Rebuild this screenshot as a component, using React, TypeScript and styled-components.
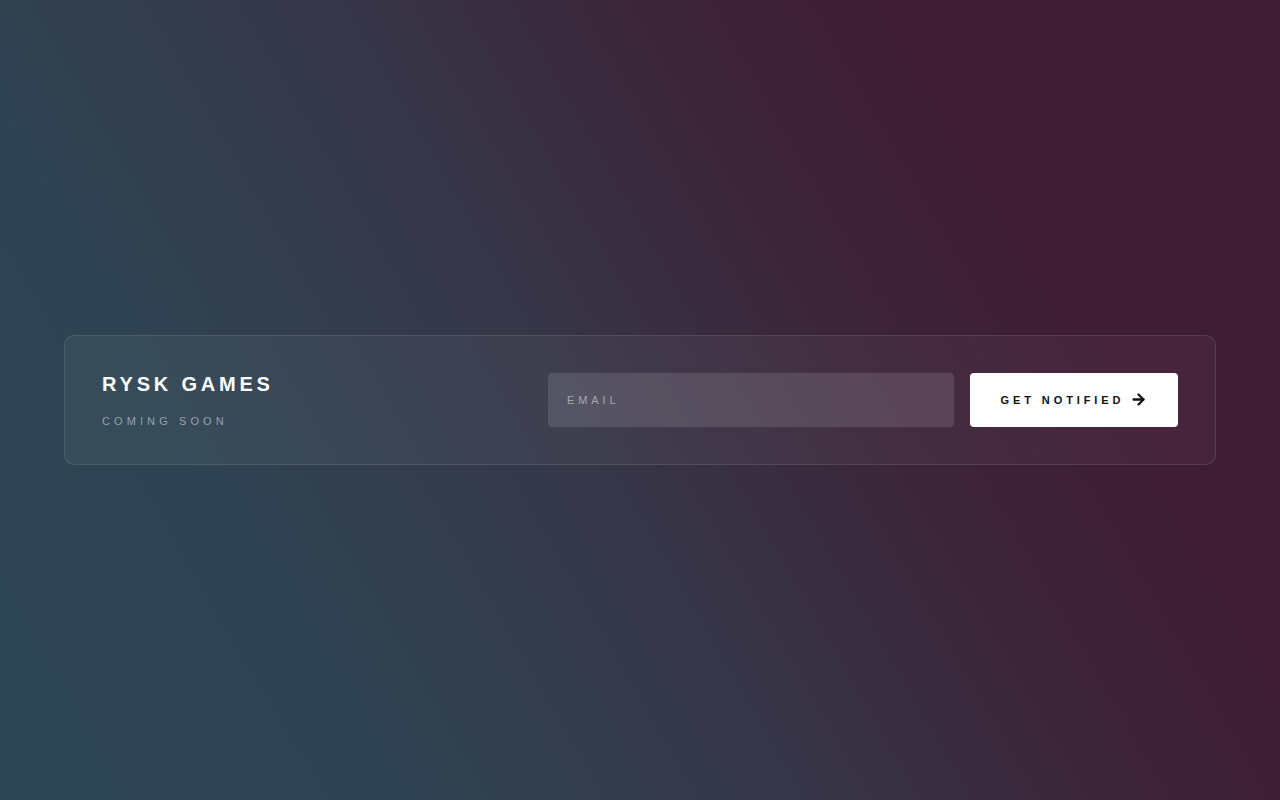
import { ArrowRight } from 'lucide-react'
import styled, { createGlobalStyle } from 'styled-components'

const GlobalStyle = createGlobalStyle`
  html, body, #root {
    margin: 0;
    height: 100%;
  }

  body {
    font-family: 'Liberation Sans', Arial, sans-serif;
    -webkit-font-smoothing: antialiased;
  }
`

const App = () => (
  <>
    <GlobalStyle />
    <Page>
      <Card>
        <Brand>
          <Title>RYSK GAMES</Title>
          <Subtitle>COMING SOON</Subtitle>
        </Brand>
        <SignupForm onSubmit={(e) => e.preventDefault()}>
          <EmailInput type="email" placeholder="EMAIL" />
          <NotifyButton type="submit">
            GET NOTIFIED
            <ArrowRight size={17} strokeWidth={3.2} />
          </NotifyButton>
        </SignupForm>
      </Card>
    </Page>
  </>
)

export default App

const Page = styled.main`
  box-sizing: border-box;
  min-height: 100vh;
  display: flex;
  align-items: center;
  padding: 0 64px;
  background: linear-gradient(
    60deg,
    #2e4654 0%,
    #2f4453 22%,
    #363648 46%,
    #3c2539 63%,
    #3e1c34 78%,
    #3e1c34 100%
  );
`

const Card = styled.section`
  flex: 1;
  display: flex;
  align-items: center;
  justify-content: space-between;
  padding: 37px;
  border: 1px solid rgba(255, 255, 255, 0.1);
  border-radius: 10px;
  background: rgba(255, 255, 255, 0.045);
`

const Brand = styled.div`
  display: flex;
  flex-direction: column;
  gap: 20px;
`

const Title = styled.h1`
  margin: 0;
  color: #ffffff;
  font-size: 20px;
  line-height: 22px;
  font-weight: 700;
  letter-spacing: 3.8px;
`

const Subtitle = styled.p`
  margin: 0;
  color: #98a1ab;
  font-size: 11px;
  line-height: 12px;
  font-weight: 400;
  letter-spacing: 4.1px;
`

const SignupForm = styled.form`
  display: flex;
  gap: 16px;
`

const EmailInput = styled.input`
  box-sizing: border-box;
  width: 406px;
  height: 54px;
  padding: 0 19px;
  border: none;
  border-radius: 4px;
  background: rgba(255, 255, 255, 0.12);
  color: #ffffff;
  font-family: inherit;
  font-size: 11px;
  letter-spacing: 3.9px;
  outline: none;

  &::placeholder {
    color: #aaa4b0;
  }
`

const NotifyButton = styled.button`
  box-sizing: border-box;
  width: 208px;
  height: 54px;
  display: flex;
  align-items: center;
  justify-content: center;
  gap: 6px;
  padding: 0 0 1px;
  border: none;
  border-radius: 4px;
  background: #ffffff;
  color: #111111;
  font-family: inherit;
  font-size: 11px;
  font-weight: 700;
  letter-spacing: 3.9px;
  cursor: pointer;
`
